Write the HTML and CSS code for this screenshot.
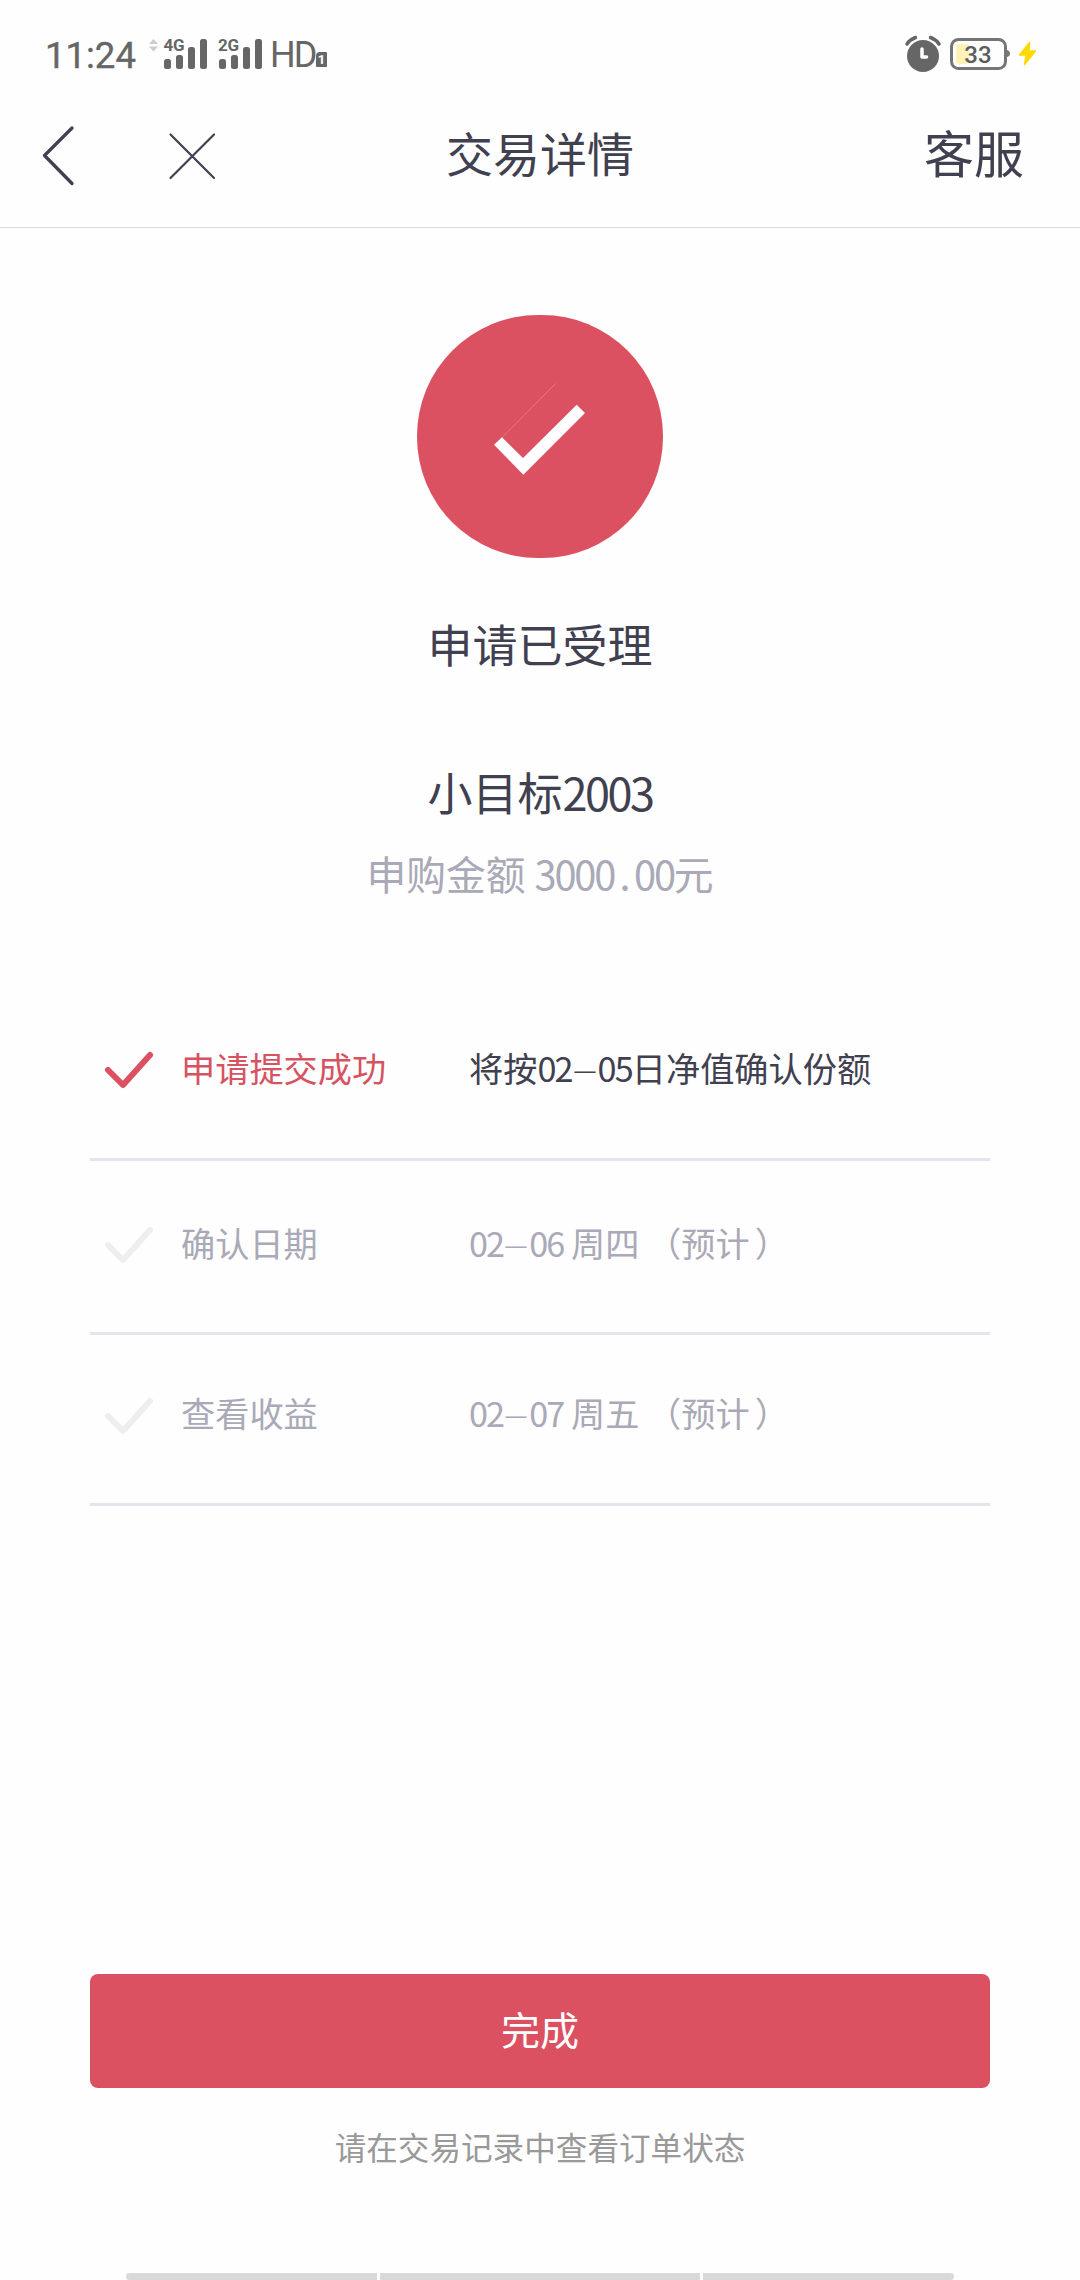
FILE: index.html
```html
<!DOCTYPE html>
<html lang="zh-CN">
<head>
  <meta charset="UTF-8">
  <meta name="viewport" content="width=device-width, initial-scale=1.0">
  <title>交易详情</title>
  <link rel="stylesheet" href="styles.css">
</head>
<body>
  <div class="page">
    <div class="status-bar">
      <span class="time">11:24</span>
      <svg class="signals" width="120" height="36" viewBox="146 36 120 36">
        <path class="arrows" d="M149 44l4.5-5 4.5 5zM149 46.5l4.5 5 4.5-5z"/>
        <g id="bars">
          <rect x="164" y="59" width="7" height="10" rx="2.5"/>
          <rect x="176" y="55" width="7" height="14" rx="2.5"/>
          <rect x="188" y="47" width="7" height="22" rx="2.5"/>
          <rect x="200" y="39" width="7" height="30" rx="2.5"/>
        </g>
        <use href="#bars" x="55"/>
        <text x="163.5" y="51" textLength="21">4G</text>
        <text x="218" y="51" textLength="21">2G</text>
      </svg>
      <span class="hd">HD</span>
      <span class="sim">1</span>
      <div class="status-right">
        <svg width="38" height="38" viewBox="904 34 38 38">
          <circle cx="923" cy="55" r="16" fill="#666"/>
          <path d="M907 43q3-4.500 8.500-6.500M939 43q-3-4.500-8.500-6.500" fill="none" stroke="#666" stroke-width="3.500" stroke-linecap="round"/>
          <path d="M922 48v8h4.500" fill="none" stroke="#fff" stroke-width="3.500" stroke-linecap="round" stroke-linejoin="round"/>
        </svg>
        <svg class="battery" width="62" height="34" viewBox="949 37 62 34">
          <rect x="956" y="44" width="13" height="20" rx="3" fill="#fff2b8"/>
          <rect x="951.500" y="39.500" width="54" height="29" rx="7" fill="none" stroke="#757575" stroke-width="3"/>
          <path d="M1007 50q3 1 3 3.500t-3 3.500z" fill="#757575"/>
          <text x="978" y="63" text-anchor="middle">33</text>
        </svg>
        <svg width="20" height="26" viewBox="1018 42 20 26">
          <path d="M1029.500 43.500l-10 12.500h6.500l-1.500 9.500 11-13.500h-6.500z" fill="#ffd900" stroke="#ffd900" stroke-width="1.500" stroke-linejoin="round"/>
        </svg>
      </div>
    </div>

    <div class="navbar">
      <div class="nav-left">
        <svg width="36" height="62" viewBox="40 125 36 62">
          <path d="M72 128L44.500 155.500l27.500 28" stroke-width="3.300"/>
        </svg>
        <svg width="48" height="48" viewBox="168 132 48 48">
          <path d="M170.500 134.500l43.500 43.500M214 134.500L170.500 178" stroke-width="2.200"/>
        </svg>
      </div>
      <h1>交易详情</h1>
      <a class="service">客服</a>
    </div>

    <div class="result">
      <div class="result-icon">
        <svg width="92" height="92" viewBox="494 383 92 92">
          <path d="M502 437.500L555.700 383.500" stroke="#e88c98" stroke-width="0.700"/>
          <path d="M494 444.700l8-7.400L523 458l53.700-53.300 8.300 8.300-61.700 61.700z" fill="#fff"/>
        </svg>
      </div>
      <h2>申请已受理</h2>
      <h3>小目标<span class="num">2003</span></h3>
      <p class="amount">申购金额 <span class="num">3000<span class="dot">.</span>00</span>元</p>
    </div>

    <ul class="steps">
      <li class="step done">
        <svg class="tick" width="50" height="38" viewBox="0 0 50 38"><path d="M4 19l15 15L46 4"/></svg>
        <span class="label">申请提交成功</span>
        <span class="detail">将按<span class="num">02<span class="dash">–</span>05</span>日净值确认份额</span>
      </li>
      <li class="step">
        <svg class="tick" width="50" height="38" viewBox="0 0 50 38"><path d="M4 19l15 15L46 4"/></svg>
        <span class="label">确认日期</span>
        <span class="detail"><span class="num">02<span class="dash">–</span>06</span> 周四 （<span class="expect">预计</span>）</span>
      </li>
      <li class="step last">
        <svg class="tick" width="50" height="38" viewBox="0 0 50 38"><path d="M4 19l15 15L46 4"/></svg>
        <span class="label">查看收益</span>
        <span class="detail"><span class="num">02<span class="dash">–</span>07</span> 周五 （<span class="expect">预计</span>）</span>
      </li>
    </ul>

    <div class="footer">
      <button type="button">完成</button>
      <p class="hint">请在交易记录中查看订单状态</p>
    </div>

    <div class="gesture-bar">
      <span></span>
      <span class="middle"></span>
      <span></span>
    </div>
  </div>
</body>
</html>
```

FILE: styles.css
```css
* {
  box-sizing: border-box;
}

body {
  margin: 0;
  background: #fefefe;
  color: #404050;
  font-family: "Noto Sans CJK SC", sans-serif;
}

h1, h2, h3, p, ul {
  margin: 0;
  padding: 0;
  font-weight: 400;
}

svg {
  display: block;
  flex-shrink: 0;
}

.page {
  display: flex;
  flex-direction: column;
  width: 1080px;
  height: 2280px;
  overflow: hidden;
}

/* 状态栏 */
.status-bar {
  display: flex;
  align-items: center;
  height: 90px;
  padding: 18px 42px 0 45px;
  color: #666;
  font-family: Roboto, sans-serif;
}

.time {
  width: 101px;
  padding-top: 2px;
  font-size: 36.500px;
  -webkit-text-stroke: 0.400px #666;
}

.signals {
  fill: #666;
  font-size: 17px;
  font-weight: 700;
}

.signals .arrows {
  fill: #ccc;
}

.hd {
  margin-left: 4px;
  width: 46px;
  padding-top: 1px;
  font-size: 36px;
  letter-spacing: -2px;
}

.sim {
  margin: 10px 0 0 0;
  width: 11px;
  height: 15px;
  border-radius: 4px 1px 1px 1px;
  background: #666;
  color: #fff;
  font-size: 13px;
  font-weight: 700;
  line-height: 15px;
  text-align: center;
}

.status-right {
  display: flex;
  align-items: center;
  gap: 7px;
  margin-left: auto;
}

.battery text {
  fill: #5c5c5c;
  font-size: 24px;
  font-weight: 500;
}

/* 导航栏 */
.navbar {
  display: grid;
  grid-template-columns: 1fr auto 1fr;
  align-items: center;
  height: 138px;
  padding: 0 56px 6px 40px;
  border-bottom: 1px solid #ddd;
}

.nav-left {
  display: flex;
  align-items: center;
  gap: 92px;
}

.nav-left path {
  fill: none;
  stroke: #404050;
  stroke-linecap: round;
  stroke-linejoin: round;
}

.navbar h1 {
  margin: 0 0 8px 16px;
  font-size: 47px;
  line-height: 60px;
}

.service {
  justify-self: end;
  margin-bottom: 9px;
  font-size: 50px;
  line-height: 60px;
}

/* 受理结果 */
.result {
  display: flex;
  flex-direction: column;
  align-items: center;
  height: 753px;
  padding-top: 87px;
}

.result-icon {
  display: flex;
  align-items: center;
  justify-content: center;
  width: 246px;
  height: 243px;
  padding-bottom: 15px;
  border-radius: 121px;
  background: #db5161;
}

.result h2 {
  margin-top: 56px;
  font-size: 45px;
  line-height: 60px;
}

.result h3 {
  margin-top: 88px;
  font-size: 45px;
  line-height: 60px;
}

.num {
  letter-spacing: -0.055em;
}

.amount {
  margin-top: 26px;
  color: #a9a9b7;
  font-size: 39.800px;
  line-height: 50px;
}

.dot {
  display: inline-block;
  width: 0.5em;
  text-align: center;
}

/* 进度 */
.steps {
  margin: 0 90px;
  list-style: none;
}

.step {
  display: grid;
  grid-template-columns: 78px 287px 1fr;
  align-items: center;
  height: 174px;
  padding: 0 0 10px 13px;
  border-bottom: 3px solid #e4e4ec;
  color: #a9a9b7;
  font-size: 34.200px;
  line-height: 44px;
}

.step.done {
  height: 180px;
  padding-bottom: 6px;
  color: #404050;
}

.step.last {
  height: 171px;
  padding-bottom: 14px;
}

.done .label {
  color: #d65362;
}

.detail {
  padding-left: 1px;
}

.dash {
  display: inline-block;
  width: 26px;
  font-weight: 300;
  letter-spacing: 0;
  text-align: center;
  transform: scaleX(1.4);
}

.expect {
  margin-right: 5px;
}

.tick {
  margin: 7px 0 0 1px;
  fill: none;
  stroke: #eee;
  stroke-width: 6;
  stroke-linecap: round;
  stroke-linejoin: round;
}

.done .tick {
  stroke: #db5161;
}

/* 底部 */
.footer {
  margin: auto 90px 0;
  text-align: center;
}

.footer button {
  display: block;
  width: 100%;
  height: 114px;
  padding: 0 0 6px;
  border: none;
  border-radius: 8px;
  background: #db5161;
  color: #fff;
  font-family: inherit;
  font-size: 39px;
}

.hint {
  margin: 36px 0 105px;
  color: #999;
  font-size: 31.600px;
  line-height: 44px;
}

.gesture-bar {
  display: flex;
  gap: 3px;
  height: 7px;
  margin: 0 126px;
}

.gesture-bar span {
  flex: 251;
  background: #d9d9d9;
}

.gesture-bar .middle {
  flex: 320;
}

.gesture-bar span:first-child {
  border-radius: 4px 0 0 4px;
}

.gesture-bar span:last-child {
  border-radius: 0 4px 4px 0;
}
```
